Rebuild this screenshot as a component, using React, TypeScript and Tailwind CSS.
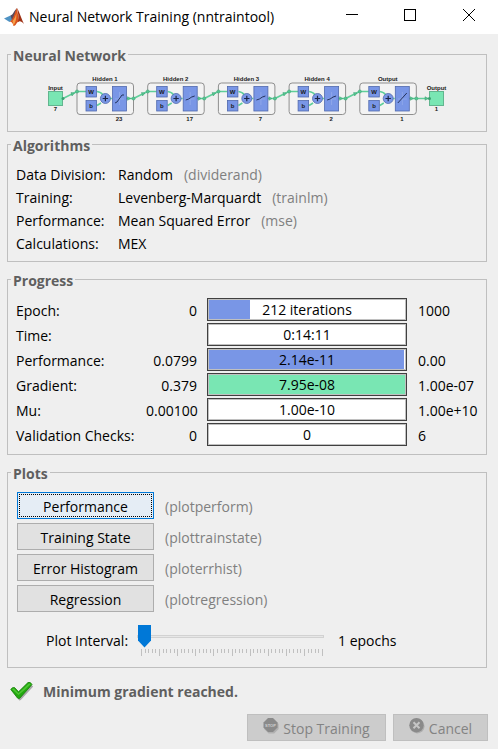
import { useState } from "react";
import type { ReactNode } from "react";

const layers = [
  { name: "Hidden 1", size: "23", curve: "M115 103 L117 102 L122 95 L124 95" },
  { name: "Hidden 2", size: "17", curve: "M115 100 L118 99 L121 97 L124 96" },
  { name: "Hidden 3", size: "7", curve: "M115 100 L118 99 L121 97 L124 96" },
  { name: "Hidden 4", size: "2", curve: "M115 100 L118 99 L121 97 L124 96" },
  { name: "Output", size: "1", curve: "M115 103 L124 93" },
];

const algorithms = [
  { label: "Data Division:", value: "Random", fn: "(dividerand)" },
  { label: "Training:", value: "Levenberg-Marquardt", fn: "(trainlm)" },
  { label: "Performance:", value: "Mean Squared Error", fn: "(mse)" },
  { label: "Calculations:", value: "MEX", fn: "" },
];

const progress = [
  { label: "Epoch:", start: "0", text: "212 iterations", end: "1000", percent: 21, fill: "bg-[#7996e6]" },
  { label: "Time:", start: "", text: "0:14:11", end: "", percent: 0, fill: "bg-[#7996e6]" },
  { label: "Performance:", start: "0.0799", text: "2.14e-11", end: "0.00", percent: 99.5, fill: "bg-[#7996e6]" },
  { label: "Gradient:", start: "0.379", text: "7.95e-08", end: "1.00e-07", percent: 100, fill: "bg-[#79e6b3]" },
  { label: "Mu:", start: "0.00100", text: "1.00e-10", end: "1.00e+10", percent: 0, fill: "bg-[#7996e6]" },
  { label: "Validation Checks:", start: "0", text: "0", end: "6", percent: 0, fill: "bg-[#7996e6]" },
];

const plots = [
  { label: "Performance", fn: "(plotperform)" },
  { label: "Training State", fn: "(plottrainstate)" },
  { label: "Error Histogram", fn: "(ploterrhist)" },
  { label: "Regression", fn: "(plotregression)" },
];

function Group({ title, className, children }: { title: string; className: string; children: ReactNode }) {
  return (
    <fieldset className={`min-w-0 border border-[#bfbfbf] ${className}`}>
      <legend className="ml-[3px] px-[2px] pt-1 text-[14px] font-bold leading-4 text-[#5f5f5f]">{title}</legend>
      {children}
    </fieldset>
  );
}

function MatlabIcon() {
  return (
    <svg className="size-5 shrink-0" viewBox="0 0 20 20" aria-hidden="true">
      <path d="M0 11.5 L6.5 8.5 L9.5 12 L5.5 15 Z" fill="#4f93c4" />
      <path d="M6.5 8.5 C9 8 10.5 3 13 1 L10 11 L8 13 Z" fill="#5a4a5c" />
      <path d="M13 1 C10.500 5 10.500 11 5.500 15 C8 14 9 17 9.500 19 C12.500 18.500 13 14 15 14.500 Z" fill="#d9531e" />
      <path d="M13 1 C15 4 17.500 12 20 17 C17.500 14.500 16 13.500 14 15 C15 10 14 5 13 1 Z" fill="#9e3216" />
      <path d="M8.500 14 C10.500 12 11.500 9 12.500 6 C12.500 11 12 15 9.500 18.500 Z" fill="#f5a04a" />
    </svg>
  );
}

function Layer({ index, name, size, curve }: { index: number; name: string; size: string; curve: string }) {
  return (
    <g transform={`translate(${index * 70.700} 0)`}>
      <rect x="77" y="83" width="56.500" height="31.500" rx="3" fill="#f3f3f3" stroke="#8f8f8f" />
      <g stroke="#5fcf9a" strokeWidth="1.500" fill="none">
        <path d="M77 91.500 H86 M97 91.500 Q101 92 103 95 M97 105.500 L101 103 M110 98.500 H112 M126 98.500 H133.500" />
        {index < 4 && <path d="M133.500 98.500 L147.500 91.500" />}
      </g>
      <g fill="#55c792" stroke="#3a9f70" strokeWidth=".5">
        <circle cx="77" cy="91.500" r="1.600" />
        <circle cx="133.500" cy="98.500" r="1.600" />
        <path d="M127.500 96.700 L130.500 98.500 L127.500 100.300 Z" />
        {index < 4 && <path d="M141.500 92.500 L145 93 L142.500 96 Z" />}
      </g>
      <g fill="#7996e6" stroke="#5069ad" strokeWidth=".8">
        <rect x="86" y="86.500" width="10.500" height="10.500" />
        <rect x="86" y="100.500" width="10.500" height="10.500" />
        <rect x="112.500" y="86.500" width="14" height="24.500" />
        <circle cx="105.400" cy="98.500" r="5" />
      </g>
      <path d="M119.500 92 V105 M115 99 H124" stroke="#93abeb" strokeWidth=".8" />
      <path d={curve} stroke="#26345e" fill="none" />
      <path d="M105.400 95.800 V101.200 M102.700 98.500 H108.100" stroke="#1c2544" strokeWidth="1.200" />
      <g className="text-[6px] font-bold" textAnchor="middle" fill="#1a1a1a">
        <text x="91.200" y="94">W</text>
        <text x="91.200" y="108">b</text>
        <text x="105" y="80.500">{name}</text>
        <text x="119" y="120.500">{size}</text>
      </g>
    </g>
  );
}

function NetworkDiagram() {
  return (
    <svg
      className="mx-auto block h-[52px] w-[400px] max-w-full font-['Liberation_Sans',Arial,sans-serif]"
      viewBox="47 72 400 52"
      role="img"
      aria-label="Network diagram"
    >
      <g stroke="#5fcf9a" strokeWidth="1.500">
        <path d="M63 98.500 L77 91.500" />
        <path d="M416 98.500 H430" />
      </g>
      {layers.map((layer, i) => (
        <Layer key={layer.name} index={i} {...layer} />
      ))}
      <g fill="#55c792" stroke="#3a9f70" strokeWidth=".5">
        <path d="M71 92.500 L74.500 93 L72 96 Z" />
        <path d="M425 96.700 L428 98.500 L425 100.300 Z" />
      </g>
      <g fill="#79e6b3" stroke="#62b58f">
        <rect x="48.500" y="91.500" width="14" height="14" />
        <rect x="429.500" y="91.500" width="14" height="14" />
      </g>
      <circle cx="63" cy="98.500" r="1.500" fill="#3a9f70" />
      <circle cx="429.500" cy="98.500" r="1.500" fill="#3a9f70" />
      <g className="text-[6px] font-bold" textAnchor="middle" fill="#1a1a1a">
        <text x="55.500" y="89.500">Input</text>
        <text x="55.500" y="111">7</text>
        <text x="436.500" y="89.500">Output</text>
        <text x="436.500" y="111">1</text>
      </g>
    </svg>
  );
}

function Ticks() {
  return (
    <svg className="block h-2 w-[187px]" viewBox="0 0 187 8" shapeRendering="crispEdges" aria-hidden="true">
      {Array.from({ length: 51 }, (_, i) => (
        <rect key={i} x={4 + Math.round(i * 3.62)} y="1" width="1" height={i % 5 === 0 ? 7 : 4} fill="#c0c0c0" />
      ))}
    </svg>
  );
}

export default function App() {
  const [interval, setInterval] = useState(1);

  return (
    <div className="min-h-screen bg-[#efefef] pb-2 font-['Open_Sans','Noto_Sans',sans-serif] text-[14px] leading-[23px] text-black">
      <header className="flex h-[34px] items-center bg-white pl-1">
        <MatlabIcon />
        <h1 className="ml-[5px] flex-1 whitespace-nowrap text-[14px] leading-5">Neural Network Training (nntraintool)</h1>
        <div className="flex h-[30px] self-start">
          <button type="button" aria-label="Minimize" className="flex w-[58px] items-center justify-center">
            <svg className="size-3" viewBox="0 0 12 12"><path d="M0 5.500 H12" stroke="#000" /></svg>
          </button>
          <button type="button" aria-label="Maximize" className="flex w-[58px] items-center justify-center">
            <svg className="size-3" viewBox="0 0 12 12"><rect x=".5" y=".5" width="11" height="11" fill="none" stroke="#000" /></svg>
          </button>
          <button type="button" aria-label="Close" className="flex w-[59px] items-center justify-center">
            <svg className="h-3 w-[13px]" viewBox="0 0 13 12"><path d="M1 0 L13 12 M13 0 L1 12" stroke="#000" /></svg>
          </button>
        </div>
      </header>

      <main className="pl-[7px] pr-[11px] pt-[10px]">
        <Group title="Neural Network" className="pb-[7px]">
          <div className="pt-2">
            <NetworkDiagram />
          </div>
        </Group>

        <Group title="Algorithms" className="mt-[2px] pb-[6px]">
          <dl className="pl-2 pt-[9px]">
            {algorithms.map((a) => (
              <div key={a.label} className="flex">
                <dt className="w-[102px]">{a.label}</dt>
                <dd>{a.value}</dd>
                {a.fn && <dd className="ml-[11px] text-[#808080]">{a.fn}</dd>}
              </div>
            ))}
          </dl>
        </Group>

        <Group title="Progress" className="mt-[7px] pb-2">
          <div className="flex flex-col gap-[2px] pl-2 pt-[9px]">
            {progress.map((p) => (
              <div key={p.label} className="grid grid-cols-[130px_51px_200px_1fr] whitespace-nowrap">
                <span className="pt-[2px] leading-[21px]">{p.label}</span>
                <span className="pt-[2px] text-right leading-[21px]">{p.start}</span>
                <div
                  role="progressbar"
                  aria-label={p.label}
                  aria-valuenow={p.percent}
                  aria-valuetext={p.text}
                  className="relative ml-[10px] h-[23px] w-[200px] border border-[#404040] bg-white"
                >
                  <div className="h-full border border-[#c0c0c0]">
                    <div className={`h-full ${p.fill}`} style={{ width: `${p.percent}%` }} />
                  </div>
                  <span className="absolute inset-0 text-center font-medium leading-[21px]">{p.text}</span>
                </div>
                <span className="pl-[21px] pt-[2px] leading-[21px]">{p.end}</span>
              </div>
            ))}
          </div>
        </Group>

        <Group title="Plots" className="mt-[7px] pb-[11px]">
          <div className="flex flex-col gap-1 pl-[9px] pt-[10px]">
            {plots.map((p, i) => (
              <div key={p.label} className="flex items-center">
                <button
                  type="button"
                  className={
                    i === 0
                      ? "h-[27px] w-[137px] border border-[#0078d7] bg-[#e5edf5] p-px"
                      : "h-[27px] w-[137px] border border-[#adadad] bg-[#e1e1e1] p-px"
                  }
                >
                  <span
                    className={
                      i === 0
                        ? "flex h-full items-center justify-center border border-dotted border-black pt-px"
                        : "flex h-full items-center justify-center pt-px"
                    }
                  >
                    {p.label}
                  </span>
                </button>
                <span className="ml-[11px] pt-[2px] text-[#808080]">{p.fn}</span>
              </div>
            ))}
          </div>
          <div className="flex items-center pl-[38px] pt-3">
            <label htmlFor="plot-interval" className="w-[91px] pt-px">Plot Interval:</label>
            <div className="w-[187px]">
              <input
                id="plot-interval"
                type="range"
                min={1}
                max={100}
                value={interval}
                onChange={(e) => setInterval(Number(e.target.value))}
                className="block h-6 w-full appearance-none bg-transparent [&::-webkit-slider-runnable-track]:h-[3px] [&::-webkit-slider-runnable-track]:border [&::-webkit-slider-runnable-track]:border-[#d2d2d2] [&::-webkit-slider-runnable-track]:bg-[#e7e7e7] [&::-webkit-slider-thumb]:-mt-[11px] [&::-webkit-slider-thumb]:h-[23px] [&::-webkit-slider-thumb]:w-[13px] [&::-webkit-slider-thumb]:appearance-none [&::-webkit-slider-thumb]:bg-[#0078d7] [&::-webkit-slider-thumb]:[clip-path:polygon(0_0,100%_0,100%_70%,50%_100%,0_70%)]"
              />
              <Ticks />
            </div>
            <output htmlFor="plot-interval" className="ml-[14px] pt-px">{interval} epochs</output>
          </div>
        </Group>
      </main>

      <footer className="px-[10px] pt-[11px]">
        <p className="flex h-6 items-center gap-[10px] font-bold text-[#5f5f5f]">
          <svg className="h-5 w-[23px]" viewBox="0 0 23 20" aria-hidden="true">
            <path d="M1.500 9 L4.500 6.500 L9 11 L19 2 L22.500 4.500 L10 18 L8.500 18.500 Z" transform="translate(.8 .9)" fill="#777" opacity=".6" />
            <path d="M.8 8.500 Q2 6 4.500 6.500 L8.500 10.800 L18 1.500 Q20.500 .5 22 3.500 L10 17 Q8.800 18.200 7.500 17 Z" fill="#22a80f" stroke="#168008" strokeWidth=".8" />
            <path d="M2 8.200 Q3 7.200 4.200 7.800 L8.500 12.300 L18.500 2.700 Q20 2 20.800 3.300 L14 9.500 L8.500 14 Z" fill="#4cc532" />
          </svg>
          Minimum gradient reached.
        </p>
        <div className="mt-[11px] flex justify-end gap-[7px] text-[#838383]">
          <button type="button" disabled className="flex h-[27px] w-[139px] items-center justify-center gap-1 border border-[#bfbfbf] bg-[#cccccc]">
            <svg className="mb-1 size-4" viewBox="0 0 16 16" aria-hidden="true">
              <path d="M5 .5 H10.500 L15 5 V10 L10.500 14.500 H5 L.5 10 V5 Z" transform="translate(.6 1)" fill="#b0b0b0" />
              <path d="M5 0 H10 L14.500 4.500 V9.500 L10 14 H5 L.5 9.500 V4.500 Z" fill="#8a8a8a" />
              <text x="7.500" y="9" textAnchor="middle" className="font-['Liberation_Sans',Arial,sans-serif] text-[4px] font-bold" fill="#d0d0d0">STOP</text>
            </svg>
            <span className="pt-px">Stop Training</span>
          </button>
          <button type="button" disabled className="flex h-[27px] w-[95px] items-center justify-center gap-1 border border-[#bfbfbf] bg-[#cccccc]">
            <svg className="mb-1 size-4" viewBox="0 0 16 16" aria-hidden="true">
              <circle cx="8.300" cy="8.200" r="7.300" fill="#b0b0b0" />
              <circle cx="7.500" cy="7.200" r="7.200" fill="#8a8a8a" />
              <path d="M4.500 4.200 L10.500 10.200 M10.500 4.200 L4.500 10.200" stroke="#c6c6c6" strokeWidth="2" />
            </svg>
            <span className="pt-px">Cancel</span>
          </button>
        </div>
      </footer>
    </div>
  );
}
